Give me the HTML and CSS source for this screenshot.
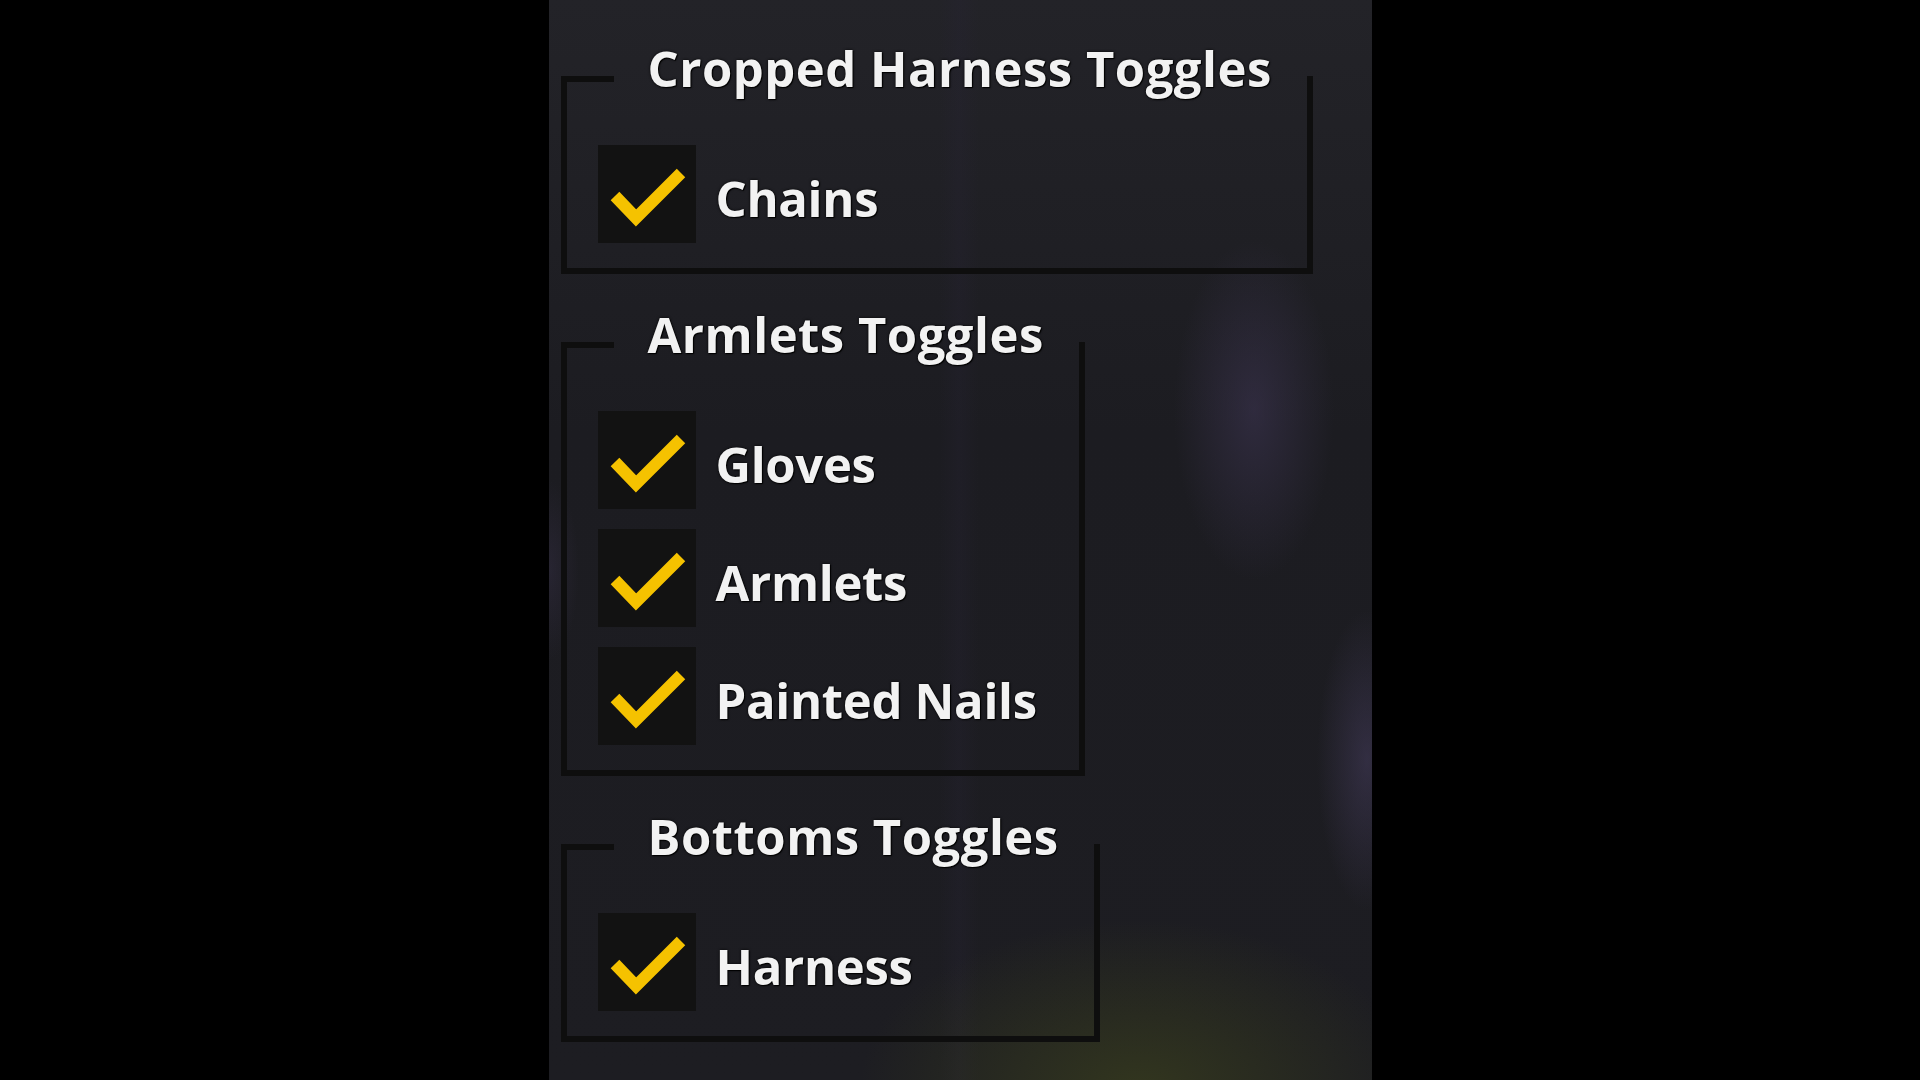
FILE: index.html
```html
<!DOCTYPE html>
<html lang="en">
<head>
    <meta charset="UTF-8">
    <meta name="viewport" content="width=device-width, initial-scale=1.0">
    <title>Outfit Toggles</title>
    <link rel="stylesheet" href="styles.css">
</head>
<body>
    <div class="panel">
        <!-- Cropped harness -->
        <fieldset class="group">
            <legend>Cropped Harness Toggles</legend>
            <label class="toggle">
                <span class="box"><svg viewBox="0 0 98 98"><polyline points="17,51 38,73 83,28"/></svg></span>
                <span class="name">Chains</span>
            </label>
        </fieldset>

        <!-- Armlets -->
        <fieldset class="group">
            <legend>Armlets Toggles</legend>
            <label class="toggle">
                <span class="box"><svg viewBox="0 0 98 98"><polyline points="17,51 38,73 83,28"/></svg></span>
                <span class="name">Gloves</span>
            </label>
            <label class="toggle">
                <span class="box"><svg viewBox="0 0 98 98"><polyline points="17,51 38,73 83,28"/></svg></span>
                <span class="name">Armlets</span>
            </label>
            <label class="toggle">
                <span class="box"><svg viewBox="0 0 98 98"><polyline points="17,51 38,73 83,28"/></svg></span>
                <span class="name">Painted Nails</span>
            </label>
        </fieldset>

        <!-- Bottoms -->
        <fieldset class="group">
            <legend>Bottoms Toggles</legend>
            <label class="toggle">
                <span class="box"><svg viewBox="0 0 98 98"><polyline points="17,51 38,73 83,28"/></svg></span>
                <span class="name">Harness</span>
            </label>
        </fieldset>
    </div>
</body>
</html>
```

FILE: styles.css
```css
* {
    margin: 0;
    padding: 0;
    box-sizing: border-box;
}

body {
    font-family: "Open Sans", Lato, sans-serif;
    background-color: #000;
    color: #f2f2f2;
    height: 1080px;
    overflow: hidden;
    display: flex;
    justify-content: center;
}

.panel {
    width: 823px;
    height: 1080px;
    padding: 37px 0 0 12px;
    background-color: #1d1d22;
    background-image:
        radial-gradient(ellipse 80px 170px at 705px 410px, rgba(66, 57, 90, 0.5), transparent),
        radial-gradient(ellipse 50px 150px at 818px 760px, rgba(72, 63, 98, 0.5), transparent),
        radial-gradient(ellipse 30px 90px at 0px 570px, rgba(60, 52, 80, 0.35), transparent),
        radial-gradient(ellipse 280px 170px at 590px 1090px, rgba(64, 70, 28, 0.6), transparent),
        linear-gradient(90deg, transparent 390px, rgba(40, 36, 55, 0.25) 410px, transparent 430px),
        linear-gradient(180deg, #232328 0%, #1c1c21 40%, #1d1d22 100%);
    display: flex;
    flex-direction: column;
    align-items: flex-start;
    gap: 29px;
}

.group {
    border: 6px solid #0e0e0e;
    padding: 25px 0 25px 31px;
    display: flex;
    flex-direction: column;
    gap: 20px;
    min-width: 0;
}

.group legend {
    margin-left: 16px;
    padding: 2px 35px 23px 34px;
    font-size: 49px;
    line-height: 58px;
    font-weight: 700;
    letter-spacing: 0.5px;
    text-shadow: 0 0 3px rgba(0, 0, 0, 0.9), 1px 1px 1px #000;
}

.toggle {
    display: flex;
    align-items: center;
    gap: 20px;
    cursor: pointer;
}

.box {
    width: 98px;
    height: 98px;
    background-color: #121212;
    display: block;
}

.box svg {
    width: 98px;
    height: 98px;
    display: block;
}

.box polyline {
    fill: none;
    stroke: #f5c200;
    stroke-width: 12;
    stroke-linecap: butt;
    stroke-linejoin: miter;
}

.name {
    padding-top: 8px;
    font-size: 49px;
    font-weight: 700;
    letter-spacing: -0.3px;
    text-shadow: 0 0 3px rgba(0, 0, 0, 0.9), 1px 1px 1px #000;
}
```
